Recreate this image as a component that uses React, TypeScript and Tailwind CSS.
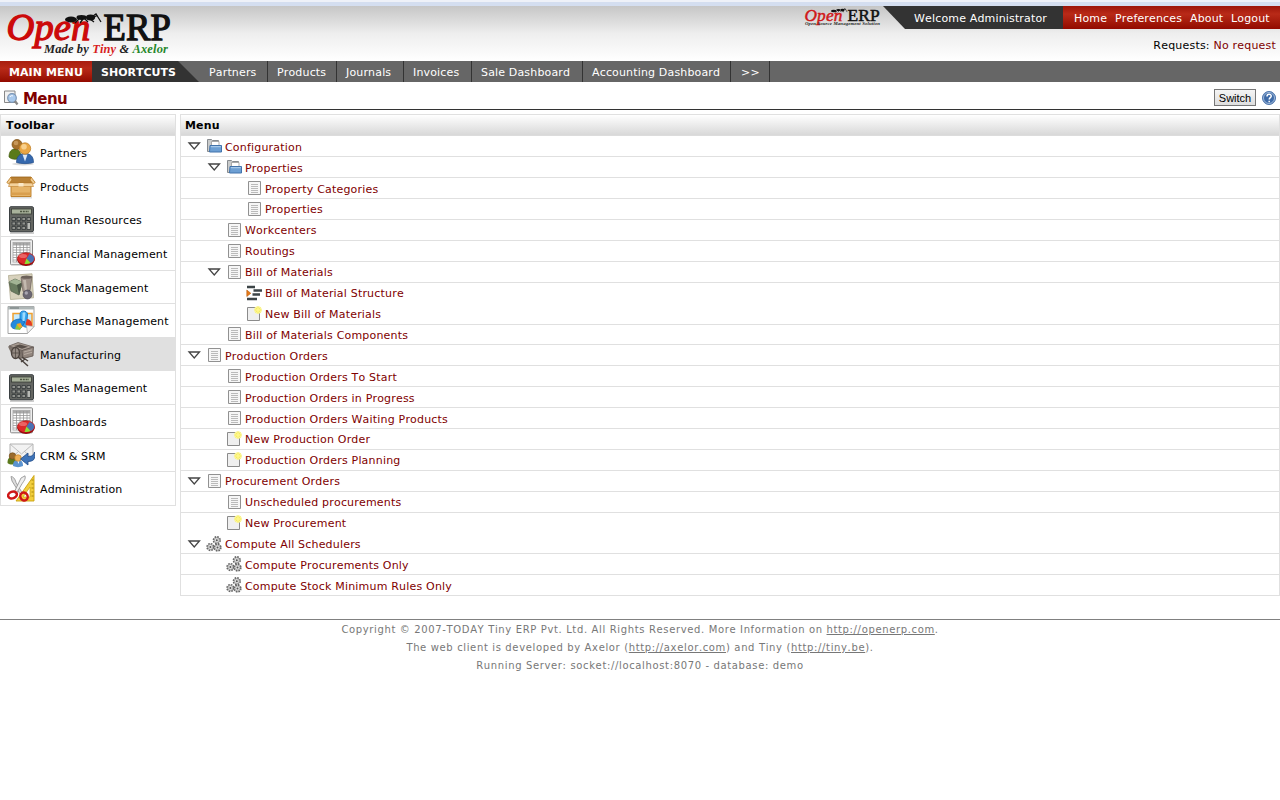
import type { ReactNode } from "react";
import clsx from "clsx";

type TreeIcon = "folder" | "list" | "new" | "gears" | "structure";

interface TreeNode {
  label: string;
  icon: TreeIcon;
  level: number;
  open?: boolean;
  noLine?: boolean;
}

const SHORTCUTS = [
  { label: "Partners", cls: "w-[69px] pl-[10px]" },
  { label: "Products", cls: "w-[69px] pl-[9px]" },
  { label: "Journals", cls: "w-[67px] pl-[9px]" },
  { label: "Invoices", cls: "w-[68px] pl-[9px]" },
  { label: "Sale Dashboard", cls: "w-[111px] pl-[9px]" },
  { label: "Accounting Dashboard", cls: "w-[148px] pl-[9px]" },
  { label: ">>", cls: "w-[39px] pl-[10px]" },
];

const NODES: TreeNode[] = [
  { label: "Configuration", icon: "folder", level: 0, open: true },
  { label: "Properties", icon: "folder", level: 1, open: true },
  { label: "Property Categories", icon: "list", level: 2 },
  { label: "Properties", icon: "list", level: 2 },
  { label: "Workcenters", icon: "list", level: 1 },
  { label: "Routings", icon: "list", level: 1 },
  { label: "Bill of Materials", icon: "list", level: 1, open: true },
  { label: "Bill of Material Structure", icon: "structure", level: 2, noLine: true },
  { label: "New Bill of Materials", icon: "new", level: 2 },
  { label: "Bill of Materials Components", icon: "list", level: 1 },
  { label: "Production Orders", icon: "list", level: 0, open: true },
  { label: "Production Orders To Start", icon: "list", level: 1 },
  { label: "Production Orders in Progress", icon: "list", level: 1 },
  { label: "Production Orders Waiting Products", icon: "list", level: 1 },
  { label: "New Production Order", icon: "new", level: 1 },
  { label: "Production Orders Planning", icon: "new", level: 1 },
  { label: "Procurement Orders", icon: "list", level: 0, open: true },
  { label: "Unscheduled procurements", icon: "list", level: 1 },
  { label: "New Procurement", icon: "new", level: 1, noLine: true },
  { label: "Compute All Schedulers", icon: "gears", level: 0, open: true },
  { label: "Compute Procurements Only", icon: "gears", level: 1 },
  { label: "Compute Stock Minimum Rules Only", icon: "gears", level: 1 },
];

const INDENT = ["pl-[6px]", "pl-[26px]", "pl-[46px]"];

function Ant() {
  return (
    <g fill="#111" stroke="#111">
      <ellipse cx="6" cy="5.500" rx="6" ry="3" stroke="none" />
      <ellipse cx="16.500" cy="3.500" rx="5" ry="2.400" stroke="none" />
      <ellipse cx="25.500" cy="3.500" rx="4.600" ry="3" stroke="none" />
      <path
        d="M14 5L10 9M18 5L15 9M19 4L23 8M25 5L29 8M28 2L31 0L33 3M29 3L32 1.500L36 8"
        fill="none"
        strokeWidth="1.300"
      />
    </g>
  );
}

function Logo() {
  return (
    <svg width="180" height="55" viewBox="0 6 180 55" className="block" fontFamily="'Liberation Serif', serif">
      <text x="6.5" y="40" fontSize="38" fontStyle="italic" fill="#cc0a0a" stroke="#cc0a0a" strokeWidth="1.3" textLength="84" lengthAdjust="spacingAndGlyphs">Open</text>
      <text x="103.5" y="40" fontSize="37" fill="#111" stroke="#111" strokeWidth="1.3" textLength="67.5" lengthAdjust="spacingAndGlyphs">ERP</text>
      <g transform="translate(65 14)">
        <Ant />
      </g>
      <text x="44" y="53" fontSize="13" fontWeight="bold" fontStyle="italic" fill="#222" textLength="124" lengthAdjust="spacingAndGlyphs">
        Made by <tspan fill="#d81e1e">Tiny</tspan> &amp; <tspan fill="#26872a">Axelor</tspan>
      </text>
    </svg>
  );
}

function SmallLogo() {
  return (
    <svg width="80" height="23" viewBox="803 6 80 23" className="block" fontFamily="'Liberation Serif', serif">
      <text x="804.5" y="20.5" fontSize="17" fontStyle="italic" fill="#d01818" stroke="#d01818" strokeWidth="0.5" textLength="38" lengthAdjust="spacingAndGlyphs">Open</text>
      <text x="847.5" y="20.5" fontSize="17" fill="#111" stroke="#111" strokeWidth="0.5" textLength="32.5" lengthAdjust="spacingAndGlyphs">ERP</text>
      <g transform="translate(831 8.5) scale(0.45)">
        <Ant />
      </g>
      <text x="805" y="25.3" fontSize="5" fontWeight="bold" fontStyle="italic" fill="#222" textLength="75" lengthAdjust="spacingAndGlyphs">Open Source Management Solution</text>
    </svg>
  );
}

function PartnersIcon() {
  return (
    <svg width="28" height="28" viewBox="0 0 28 28">
      <ellipse cx="16" cy="26" rx="11" ry="1.500" fill="#000" opacity=".15" />
      <path d="M2 19c0-6 3-8 6-8s6 2 6 8c-3 3-9 3-12 0z" fill="#5a7a1a" stroke="#3f5a0c" strokeWidth=".7" />
      <circle cx="10" cy="6.5" r="5" fill="#a5702c" stroke="#7a4d14" strokeWidth=".7" />
      <circle cx="9" cy="5" r="2.3" fill="#c6975a" />
      <path d="M9.500 24.500c0-6 3-9 8.500-9s8.500 3 8.500 9c-4 1.500-13 1.500-17 0z" fill="#3568ad" stroke="#204a87" strokeWidth=".7" />
      <path d="M15.500 16.500h5l-2.500 7z" fill="#dce8f8" />
      <circle cx="18" cy="10.500" r="5.700" fill="#e9a645" stroke="#bd7a1c" strokeWidth=".7" />
      <circle cx="17" cy="8.800" r="2.800" fill="#f8d08c" />
    </svg>
  );
}

function BoxIcon() {
  return (
    <svg width="30" height="28" viewBox="0 0 30 28" className="-mx-[1px]">
      <path d="M5 25.500h21" stroke="#000" strokeWidth="2" opacity=".13" />
      <path d="M5 5h20l1.500 6h-23z" fill="#b98135" stroke="#9a6218" strokeWidth=".8" />
      <path d="M5 11.500h20V24.500H5z" fill="#e6b468" stroke="#b9781f" strokeWidth=".9" />
      <path d="M5 5L.8 10.500l2 1.500L6 8zM25 5l4.200 5.500-2 1.500L24 8z" fill="#f0cb91" stroke="#b9781f" strokeWidth=".8" />
      <path d="M4 11h22l1.500 3.500H2.500z" fill="#f3d29c" stroke="#c4883a" strokeWidth=".7" />
      <path d="M12.500 11h5v3.500h-5z" fill="#fbe9c9" />
      <path d="M5.500 20.500h19v2.500h-19z" fill="#d99f4e" />
    </svg>
  );
}

function CalculatorIcon() {
  return (
    <svg width="28" height="28" viewBox="0 0 28 28">
      <path d="M3 27h24" stroke="#000" strokeWidth="1.500" opacity=".25" />
      <rect x="2.500" y=".7" width="24" height="25" rx="1.500" fill="#646662" stroke="#3a3f41" />
      <rect x="4.500" y="3" width="20" height="5" fill="#a9b29b" stroke="#363a33" strokeWidth=".8" />
      <path d="M13 5.500h9" stroke="#4d5642" strokeWidth="1.500" strokeDasharray="2 .8" />
      <g fill="#90928d" stroke="#33383a" strokeWidth=".8">
        <path d="M5 11.500h3.500v3H5zM10 11.500h3.500v3H10zM15 11.500h3.500v3H15zM20 11.500h3.500v3H20zM5 16h3.500v3H5zM10 16h3.500v3H10zM15 16h3.500v3H15zM5 20.500h3.500v3H5zM10 20.500h3.500v3H10zM15 20.500h3.500v3H15z" />
        <path d="M20 16.500h3.500v7H20z" fill="#b8bab5" />
      </g>
    </svg>
  );
}

function ReportIcon() {
  return (
    <svg width="28" height="28" viewBox="0 0 28 28">
      <rect x="3.500" y=".8" width="22" height="25" rx="1" fill="#eee" stroke="#888" />
      <rect x="6" y="3.500" width="17" height="19.500" fill="#fff" stroke="#999" strokeWidth=".7" />
      <path d="M6 5h17" stroke="#aaa" strokeWidth="3" />
      <path d="M6 8.500h17M6 11h17M6 13.500h17M6 16h17M6 18.500h17M6 21h17M9.500 4v19M13 4v19M16.500 4v19M20 4v19" stroke="#979797" strokeWidth=".8" />
      <ellipse cx="19" cy="21" rx="8.600" ry="6" fill="#8b1010" />
      <ellipse cx="19" cy="19.700" rx="8.600" ry="6" fill="#dc2a2a" stroke="#a40000" strokeWidth=".6" />
      <path d="M19.500 19.500l3-4.500c3 .9 4.500 2.500 4.500 4.500s-1 3.600-3.500 4.600z" fill="#4a72b4" />
      <path d="M19.500 19.500l4 4.600c-2 1-4 1.100-6 .9z" fill="#8ae234" />
      <ellipse cx="16" cy="17" rx="4" ry="2" fill="#f58a8a" opacity=".6" />
    </svg>
  );
}

function StockIcon() {
  return (
    <svg width="28" height="28" viewBox="0 0 28 28">
      <path d="M1.500 2.500L25 .8l1.500 24-23 1.700z" fill="#d8d2bd" stroke="#b0a98f" strokeWidth=".8" />
      <path d="M2 9l6-3 7 3-3 13-8-4z" fill="#6a7c60" stroke="#55624c" strokeWidth=".8" />
      <path d="M2 9l8 3 6-3-8-3z" fill="#a3b495" />
      <path d="M10 12l2 10 4-13z" fill="#4a5745" />
      <path d="M14 4.500l11-1-2 14-7 1z" fill="#a0938a" stroke="#756a62" strokeWidth=".8" />
      <ellipse cx="19.500" cy="4.200" rx="5.500" ry="1.600" fill="#6d625a" />
      <path d="M16 7l2 11h2L19 7z" fill="#c3b9af" />
      <circle cx="20.500" cy="21.500" r="4.500" fill="#6b6773" stroke="#4a4752" strokeWidth=".6" />
      <circle cx="19.300" cy="20" r="1.700" fill="#a8a5b0" />
    </svg>
  );
}

function PurchaseIcon() {
  return (
    <svg width="28" height="28" viewBox="0 0 28 28">
      <path d="M1 .500h26v20l-6.500 7H1z" fill="#fff" stroke="#9a9a9a" strokeWidth=".9" />
      <path d="M1 .500h26v3H1z" fill="#aeb6b6" />
      <path d="M3 2h9" stroke="#6d7777" />
      <path d="M6 7.500h19v12H6z" fill="#c9ebfb" stroke="#f0a030" strokeWidth="1.500" />
      <path d="M13 8c0-4 7-4 7.500 0L20 15c3 1 3.500 4 1 6-3 1-6-1-8-5z" fill="#35a5ee" stroke="#0d6fc0" strokeWidth=".8" />
      <path d="M13 13c-4 0-9 2-9 6s5 5 10 3l4-6z" fill="#238ade" stroke="#0d5fae" strokeWidth=".7" />
      <path d="M15.500 7c1-1 2.500-1 3 0l-1 8h-2z" fill="#9edcff" />
      <path d="M10 18l5 2-2 4-5-1z" fill="#8dc63f" />
      <path d="M9.500 18l4-1 2 4-3 1z" fill="#f5a623" />
      <path d="M20 13c3 0 5.500 3 5 7-1.500 2-5.500 1-6.500-2z" fill="#e53b22" />
      <path d="M20.500 27.500l-1-8 7.500 1z" fill="#f4f4f4" stroke="#aaa" strokeWidth=".7" />
    </svg>
  );
}

function CartIcon() {
  return (
    <svg width="28" height="28" viewBox="0 0 28 28">
      <path d="M1 6.500L12 4l13 4-3 9-9 2L4 13z" fill="#7c726b" />
      <path d="M2 6L11 2.500 26.500 7l-11 3.500z" fill="#a79b92" stroke="#6a605a" strokeWidth=".8" />
      <path d="M7 6l6-1.500 8 2.300-6 2z" fill="#574e48" />
      <path d="M15 10.500L26.500 7l-.500 9-10 2.500z" fill="#91857d" stroke="#5f5650" strokeWidth=".8" />
      <path d="M17 12l8-2.200M17 14.500l8-2.200" stroke="#b9ada4" strokeWidth="1" />
      <ellipse cx="8.500" cy="13" rx="4" ry="5.500" fill="#938982" stroke="#4b433e" strokeWidth="1.400" />
      <path d="M8.500 8v10M5 13h7" stroke="#4b433e" strokeWidth=".7" />
      <path d="M11 17l10 9M15 17l6 4M14 22l4-3" stroke="#4b433e" strokeWidth="1.500" />
    </svg>
  );
}

function CrmIcon() {
  return (
    <svg width="28" height="28" viewBox="0 0 28 28">
      <path d="M3 3h23v15H3z" fill="#f2f2f2" stroke="#aaa" strokeWidth=".9" />
      <path d="M3 3l11.500 10L26 3M3 18l9-8M26 18l-9-8" fill="none" stroke="#b8b8b8" strokeWidth=".9" />
      <path d="M.500 22c0-5 2-6 4.500-6s5 1 5 6c-3 2-7 2-9.500 0z" fill="#5c7a1d" />
      <circle cx="5.500" cy="15" r="3.300" fill="#9a6b2d" stroke="#6f4814" strokeWidth=".6" />
      <path d="M6 25c0-5 2-6 5-6s5 1 5 6c-3 1.500-7 1.500-10 0z" fill="#5b93cf" />
      <path d="M10 19h2.500l-1 4z" fill="#fff" />
      <circle cx="11" cy="17" r="3.300" fill="#eeb057" stroke="#bd7a1c" strokeWidth=".6" />
      <path d="M27.500 11c1 8-1 9-6.500 9.500V24l-7.500-6 7.500-6v3.500c3.500 0 5.500-1 6.500-4.500z" fill="#3f74b8" stroke="#204a87" strokeWidth=".8" />
    </svg>
  );
}

function ToolsIcon() {
  return (
    <svg width="28" height="28" viewBox="0 0 28 28">
      <path d="M27 .500V26H9z" fill="#f2cf3d" stroke="#c9a20e" strokeWidth=".9" />
      <path d="M23 12v10h-7z" fill="#fff" stroke="#c9a20e" strokeWidth=".7" />
      <path d="M26.500 5h-2M26.500 9h-2M26.500 13h-2M26.500 17h-2M26.500 21h-2" stroke="#927400" strokeWidth=".8" />
      <path d="M4 1.500c2 0 4 2 5 6l6 10-2 1.500L5 6z" fill="#dcdcdc" stroke="#8c8c8c" strokeWidth=".8" />
      <path d="M18 .800c1 3-1 5-3 8L9 19l-2-1.500L14 3z" fill="#efefef" stroke="#8c8c8c" strokeWidth=".8" />
      <ellipse cx="5.500" cy="20" rx="4.500" ry="3.300" fill="none" stroke="#cf1717" strokeWidth="2.500" transform="rotate(-20 5.500 20)" />
      <ellipse cx="17" cy="21.500" rx="3.600" ry="4" fill="none" stroke="#cf1717" strokeWidth="2.500" transform="rotate(-30 17 21.500)" />
    </svg>
  );
}

const TOOLBAR: { label: string; icon: ReactNode; active?: boolean; noLine?: boolean }[] = [
  { label: "Partners", icon: <PartnersIcon /> },
  { label: "Products", icon: <BoxIcon />, noLine: true },
  { label: "Human Resources", icon: <CalculatorIcon /> },
  { label: "Financial Management", icon: <ReportIcon /> },
  { label: "Stock Management", icon: <StockIcon /> },
  { label: "Purchase Management", icon: <PurchaseIcon /> },
  { label: "Manufacturing", icon: <CartIcon />, active: true },
  { label: "Sales Management", icon: <CalculatorIcon /> },
  { label: "Dashboards", icon: <ReportIcon /> },
  { label: "CRM & SRM", icon: <CrmIcon /> },
  { label: "Administration", icon: <ToolsIcon /> },
];

function Gear({ x, y }: { x: number; y: number }) {
  return (
    <g transform={`translate(${x} ${y})`}>
      <circle r="3.300" fill="#ddd" stroke="#666" strokeWidth="1.700" strokeDasharray="1.600 .99" />
      <circle r="2.500" fill="#e2e2e2" stroke="#888" strokeWidth=".6" />
      <circle r="1" fill="#555" />
    </g>
  );
}

function NodeIcon({ icon }: { icon: TreeIcon }) {
  return (
    <svg width="16" height="16" viewBox="0 0 16 16" className="shrink-0">
      {icon === "folder" && (
        <>
          <path d="M1.500 13.500V1.500h4l1 1h6v11z" fill="#c9cbcb" stroke="#868a8e" />
          <path d="M5.500 3.500h7.500V9H5.500z" fill="#fff" stroke="#999" strokeWidth=".8" />
          <path d="M3.500 14l.500-6.500h11.500V14z" fill="#6d9fd3" stroke="#4273ab" />
          <path d="M4.800 8.700h10" stroke="#b4d2ee" />
        </>
      )}
      {icon === "list" && (
        <>
          <path d="M2.500 1.500h12v13h-12z" fill="#f6f6f6" stroke="#919191" />
          <path d="M5 4.500h7M5 6.500h7M5 8.500h7M5 10.500h7M5 12.500h7" stroke="#bababa" />
        </>
      )}
      {icon === "new" && (
        <>
          <path d="M1.500 1.500h12v13h-12z" fill="#efefef" stroke="#8b8b8b" />
          <circle cx="12" cy="4" r="3.800" fill="#fbf59a" />
          <path d="M12 .500v7M8.500 4h7M9.700 1.700l4.600 4.600M14.300 1.700L9.700 6.300" stroke="#f6ee5c" />
          <circle cx="12" cy="4" r="1.700" fill="#fff68a" />
        </>
      )}
      {icon === "structure" && (
        <>
          <path d="M1 2h8M7.500 5.500H16M6.500 9.500H14M1 14h10" stroke="#3c4447" strokeWidth="2.600" />
          <path d="M.800 5l4 3.300-4 3.200z" fill="#e77a18" stroke="#b65b0b" strokeWidth=".6" />
        </>
      )}
      {icon === "gears" && (
        <>
          <Gear x={10.800} y={4.200} />
          <Gear x={4.400} y={11} />
          <Gear x={11.500} y={11.500} />
        </>
      )}
    </svg>
  );
}

function PanelHeader({ title, className }: { title: string; className: string }) {
  return (
    <div className={clsx("flex items-center font-bold border-b border-[#dcdcdc] bg-linear-to-b from-white to-[#d8d8d8]", className)}>
      <span className="pt-[2px]">{title}</span>
    </div>
  );
}

function TopBar() {
  return (
    <header className="flex justify-between h-[55px] bg-linear-to-b from-[#c6c6c6] via-[#eeeeee] to-white">
      <Logo />
      <div>
        <div className="flex h-[23px] text-white">
          <SmallLogo />
          <div className="w-[180px] pl-[31px] pt-[6px] bg-[#333] [clip-path:polygon(0_0,100%_0,100%_100%,22px_100%)]">Welcome Administrator</div>
          <nav className="flex w-[217px] pl-[11px] pt-[6px] bg-linear-to-b from-[#9d1408] via-[#b92a18] via-35% to-[#920900]">
            <a className="w-[41px]">Home</a>
            <a className="w-[75px]">Preferences</a>
            <a className="w-[41px]">About</a>
            <a>Logout</a>
          </nav>
        </div>
        <div className="pt-[10px] pr-[4px] text-right tracking-[0.2px]">
          Requests: <span className="text-[#800000]">No request</span>
        </div>
      </div>
    </header>
  );
}

function NavBar() {
  return (
    <nav className="flex h-[21px] leading-[23px] bg-[#666] text-white">
      <div className="w-[92px] pl-[9px] font-bold bg-linear-to-b from-[#a81d0e] via-[#b92a18] via-35% to-[#920900] tracking-[0.08px]">MAIN MENU</div>
      <div className="w-[107px] pl-[9px] font-bold bg-[#333] tracking-[0px] [clip-path:polygon(0_0,86px_0,100%_100%,0_100%)]">SHORTCUTS</div>
      {SHORTCUTS.map((s) => (
        <div key={s.label} className={clsx("h-[21px] border-r border-[#333]", s.cls)}>
          {s.label}
        </div>
      ))}
    </nav>
  );
}

function TitleBar() {
  return (
    <div className="flex items-center h-[28px] pl-[4px] pr-[4px] pt-[4px] border-b border-[#333]">
      <svg width="15" height="16" viewBox="0 0 15 16">
        <path d="M.500 1h10.500v11.500H.500z" fill="#f2f2f2" stroke="#888" />
        <circle cx="8" cy="8" r="4.300" fill="#a9c9ec" stroke="#7b95b4" strokeWidth="1.200" />
        <path d="M6 7c.500-1.500 2-1.500 3-1" stroke="#fff" fill="none" />
        <path d="M11 11l2.500 3.500" stroke="#888" strokeWidth="2.200" />
      </svg>
      <h1 className="ml-[4px] mt-[2px] text-[15px] font-bold tracking-[-0.6px] text-[#800000]">Menu</h1>
      <button className="ml-auto w-[42px] h-[17px] border border-[#777] bg-linear-to-b from-[#f4f4f4] to-[#dedede] text-[11px] leading-[17px] tracking-[0px] font-['Liberation_Sans',Arial,sans-serif]">
        Switch
      </button>
      <svg width="14" height="16" viewBox="0 0 14 16" className="ml-[6px]">
        <circle cx="7" cy="8" r="6.500" fill="#3e6ba8" stroke="#5078ae" />
        <circle cx="7" cy="8" r="5.500" fill="none" stroke="#b9cde6" strokeWidth=".8" />
        <path d="M5 6.500c0-3 4.300-2.800 4.200-.3C9.100 7.700 7.200 7.700 7.200 9.500M7.200 10.700v1.500" fill="none" stroke="#fff" strokeWidth="1.500" />
      </svg>
    </div>
  );
}

export default function App() {
  return (
    <div className="w-[1280px] h-[800px] overflow-hidden bg-white text-black text-[11px] leading-[14px] tracking-[0.16px] font-['DejaVu_Sans',Verdana,sans-serif] [font-kerning:none] whitespace-nowrap">
      <div className="h-[6px] border-t-2 border-[#eef1f8] bg-[#d4def0]" />
      <TopBar />
      <NavBar />
      <TitleBar />
      <main className="flex items-start gap-[4px] pt-[4px]">
        <aside className="w-[176px] border-x border-t border-[#e0e0e0]">
          <PanelHeader title="Toolbar" className="h-[21px] pl-[5px]" />
          {TOOLBAR.map((item) => (
            <div
              key={item.label}
              className={clsx(
                "flex items-center h-[33.640px] pl-[6px] gap-[5px] border-b",
                item.active && "bg-[#e0e0e0]",
                item.noLine ? "border-transparent" : "border-[#e0e0e0]",
              )}
            >
              {item.icon}
              <span className="pt-[3.400px] tracking-[0.120px]">{item.label}</span>
            </div>
          ))}
        </aside>
        <section className="flex-1 border-x border-t border-[#e0e0e0]">
          <PanelHeader title="Menu" className="h-[21.360px] pl-[4px]" />
          {NODES.map((node, i) => (
            <div
              key={i}
              className={clsx("flex items-center h-[20.910px] border-b text-[#800000]", INDENT[node.level], node.noLine ? "border-transparent" : "border-[#e0e0e0]")}
            >
              <div className="w-[19px]">
                {node.open && (
                  <svg width="14" height="10" viewBox="0 0 14 10">
                    <path d="M2 2h10.500L7.250 8z" fill="#fff" stroke="#444" strokeWidth="1.300" />
                  </svg>
                )}
              </div>
              <NodeIcon icon={node.icon} />
              <span className="ml-[3px] pt-[2.920px] tracking-[0.190px]">{node.label}</span>
            </div>
          ))}
        </section>
      </main>
      <footer className="mt-[22.640px] pt-[1px] border-t border-[#808080] text-center text-[10px] leading-[18px] tracking-[0.640px] text-[#777]">
        <p>
          Copyright © 2007-TODAY Tiny ERP Pvt. Ltd. All Rights Reserved. More Information on <a className="underline">http://openerp.com</a>.
        </p>
        <p>
          The web client is developed by Axelor (<a className="underline">http://axelor.com</a>) and Tiny (<a className="underline">http://tiny.be</a>).
        </p>
        <p>Running Server: socket://localhost:8070 - database: demo</p>
      </footer>
    </div>
  );
}
